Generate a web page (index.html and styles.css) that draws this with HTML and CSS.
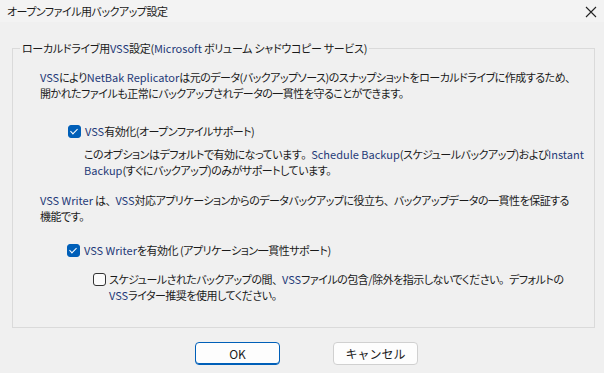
FILE: index.html
```html
<!doctype html>
<html lang="ja">
<head>
    <meta charset="UTF-8">
    <title>オープンファイル用バックアップ設定</title>
    <link rel="stylesheet" href="styles.css">
</head>
<body>
<div class="dialog">
    <div class="titlebar">
        <span class="title">オープンファイル用バックアップ設定</span>
        <span class="close">
            <svg width="12" height="12" viewBox="0 0 12 12"><path d="M1 1 L11 11 M11 1 L1 11" stroke="#222" stroke-width="1.1" fill="none"/></svg>
        </span>
    </div>

    <div class="body">
        <fieldset class="group">
            <legend>ローカルドライブ用<span class="en">VSS</span>設定(<span class="en">Microsoft</span> ボリューム シャドウコピー サービス)</legend>

            <p class="text first">
                <span class="en">VSS</span>により<span class="en">NetBak Replicator</span>は元のデータ(バックアップソース)のスナップショットをローカルドライブに作成するため<span class="p">、</span><br>
                開かれたファイルも正常にバックアップされデータの一貫性を守ることができます。
            </p>

            <label class="check lvl1">
                <span class="box checked"></span>
                <span><span class="en">VSS</span>有効化(オープンファイルサポート)</span>
            </label>
            <p class="text sub">
                このオプションはデフォルトで有効になっています<span class="p">。</span><span class="en">Schedule Backup</span>(スケジュールバックアップ)および<span class="en">Instant</span><br>
                <span class="en">Backup</span>(すぐにバックアップ)のみがサポートしています。
            </p>

            <p class="text second">
                <span class="en">VSS Writer</span> は<span class="p">、</span><span class="en">VSS</span>対応アプリケーションからのデータバックアップに役立ち<span class="p">、</span>バックアップデータの一貫性を保証する<br>
                機能です。
            </p>

            <label class="check lvl1 writer">
                <span class="box checked"></span>
                <span><span class="en">VSS Writer</span>を有効化 (アプリケーション一貫性サポート)</span>
            </label>

            <label class="check lvl2">
                <span class="box"></span>
                <span>スケジュールされたバックアップの間<span class="p">、</span><span class="en">VSS</span>ファイルの包含/除外を指示しないでください<span class="p">。</span>デフォルトの<br>
                <span class="en">VSS</span>ライター推奨を使用してください。</span>
            </label>
        </fieldset>

        <div class="buttons">
            <button class="btn primary">OK</button>
            <button class="btn">キャンセル</button>
        </div>
    </div>
</div>
</body>
</html>
```

FILE: styles.css
```css
* {
    box-sizing: border-box;
}

body {
    margin: 0;
    background: #f0f0f0;
    font-family: "Noto Sans CJK JP", "Noto Sans", sans-serif;
    font-size: 11px;
    letter-spacing: -0.5px;
    font-feature-settings: "palt";
    color: #1a1a1a;
    white-space: nowrap;
}

.dialog {
    width: 604px;
    height: 373px;
    overflow: hidden;
}

.titlebar {
    height: 22px;
    background: #f3f3f3;
    display: flex;
    align-items: center;
    justify-content: space-between;
    padding: 0 7px 0 7px;
}

.close {
    display: flex;
    align-items: center;
    margin-top: 1px;
}

.body {
    padding: 18px 0 0 12px;
}

.en {
    color: #1f3a78;
    letter-spacing: 0;
}

/* full-width punctuation, as the dialog font draws it */
.p {
    font-feature-settings: normal;
    letter-spacing: -1px;
}

.group {
    width: 583px;
    height: 288px;
    margin: 0;
    padding: 0 0 0 27px;
    border: 1px solid #dadada;
}

.group legend {
    margin-left: -20px;
    padding: 0 2px;
    line-height: 16px;
    letter-spacing: -0.3px;
}

.text {
    margin: 0;
    line-height: 16px;
}

.first {
    margin-top: 13px;
}

.check {
    display: flex;
    align-items: flex-start;
    gap: 4px;
    line-height: 16px;
}

.lvl1 {
    margin-top: 22px;
    padding-left: 28px;
}

.writer {
    margin-top: 18px;
    padding-left: 27px;
}

.lvl2 {
    margin-top: 13px;
    padding-left: 53px;
    gap: 3px;
}

.box {
    flex: none;
    width: 13px;
    height: 13px;
    margin-top: 2px;
    border: 1px solid #333;
    border-radius: 3px;
    background: #fbfbfb;
    position: relative;
}

.box.checked {
    background: #005fb8;
    border-color: #005fb8;
}

.box.checked::after {
    content: "";
    position: absolute;
    left: 3px;
    top: 1px;
    width: 3px;
    height: 6px;
    border: solid #fff;
    border-width: 0 1.5px 1.5px 0;
    transform: rotate(45deg);
}

.sub {
    margin-top: 7px;
    padding-left: 44px;
}

.second {
    margin-top: 14px;
}

.buttons {
    display: flex;
    gap: 53px;
    padding-left: 183px;
    margin-top: 14px;
}

.btn {
    width: 85px;
    height: 23px;
    font-family: inherit;
    font-size: 12px;
    letter-spacing: 0;
    color: #1a1a1a;
    background: #fdfdfd;
    border: 1px solid #d0d0d0;
    border-radius: 4px;
}

.btn.primary {
    border-color: #005fb8;
    box-shadow: inset 0 -1px 0 #005fb8;
}
```
